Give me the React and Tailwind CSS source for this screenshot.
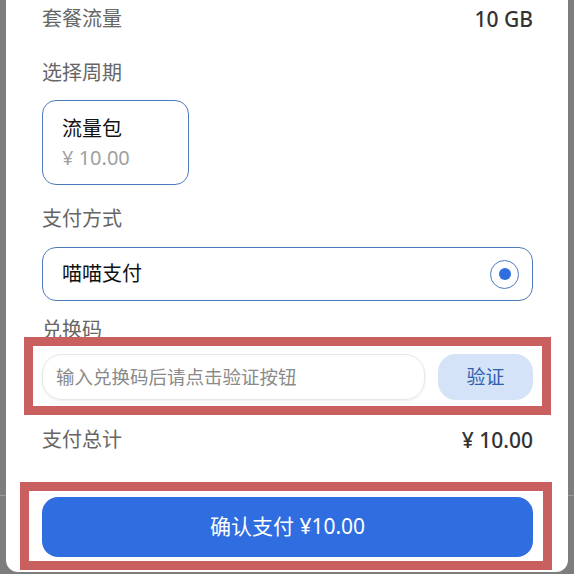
import React from "react";

export default function App() {
  return (
    <div className="relative w-[574px] h-[574px] overflow-hidden bg-[#7d7d7d] font-['Noto_Sans','Noto_Sans_CJK_SC',sans-serif]">
      <div className="absolute left-0 right-0 top-[495px] h-px bg-[#9a9a9a]" />
      <div className="relative ml-[6px] w-[562px] h-[572px] bg-white rounded-b-[12px] pl-[36px] pr-[35px] flex flex-col">
        <div className="mt-[6px] h-[26px] flex items-center justify-between text-[20px] leading-[26px]">
          <span className="text-[#666666]">套餐流量</span>
          <span className="text-[#333333] text-[21px] font-medium">10 GB</span>
        </div>
        <div className="mt-[28px] h-[26px] text-[20px] leading-[26px] text-[#666666]">选择周期</div>
        <div className="mt-[14px] w-[147px] h-[85px] border border-[#4d7bbd] rounded-[14px] pl-[19px] pt-[15px] flex flex-col">
          <span className="text-[20px] leading-[26px] text-[#111111]">流量包</span>
          <span className="mt-[3px] text-[20px] leading-[26px] text-[#a0a0a0]">¥ 10.00</span>
        </div>
        <div className="mt-[21px] h-[26px] text-[20px] leading-[26px] text-[#666666]">支付方式</div>
        <div className="mt-[15px] h-[54px] border border-[#4d7bbd] rounded-[14px] pl-[19px] pr-[13px] flex items-center justify-between">
          <span className="text-[20px] leading-[26px] text-[#111111]">喵喵支付</span>
          <span className="w-[29px] h-[29px] rounded-full border-[1.5px] border-[#4d7bbd] flex items-center justify-center">
            <span className="w-[12px] h-[12px] rounded-full bg-[#2f6de0]" />
          </span>
        </div>
        <div className="mt-[16px] h-[26px] text-[20px] leading-[26px] text-[#666666]">兑换码</div>
        <div className="mt-[11px] h-[46px] flex gap-[13px]">
          <div className="w-[383px] h-[46px] rounded-[20px] border border-[#e6e6e6] shadow-[0_1px_3px_rgba(0,0,0,0.08)] pl-[13px] flex items-center text-[18.5px] text-[#8a8a8a]">
            输入兑换码后请点击验证按钮
          </div>
          <div className="w-[95px] h-[46px] rounded-[18px] bg-[#d4e3f7] flex items-center justify-center text-[19px] text-[#2f5fae]">
            验证
          </div>
        </div>
        <div className="mt-[27px] h-[26px] flex items-center justify-between text-[20px] leading-[26px]">
          <span className="text-[#666666]">支付总计</span>
          <span className="text-[#333333] text-[21px] font-medium">¥ 10.00</span>
        </div>
        <div className="mt-[44px] h-[60px] rounded-[16px] bg-[#2f6de0] flex items-center justify-center text-[21px] text-white">
          确认支付 ¥10.00
        </div>
      </div>
      <div className="absolute left-[24px] top-[337px] w-[527px] h-[78px] border-[9px] border-[#c95f5f]" />
      <div className="absolute left-[20px] top-[482px] w-[532px] h-[88px] border-[9px] border-[#c95f5f]" />
    </div>
  );
}
